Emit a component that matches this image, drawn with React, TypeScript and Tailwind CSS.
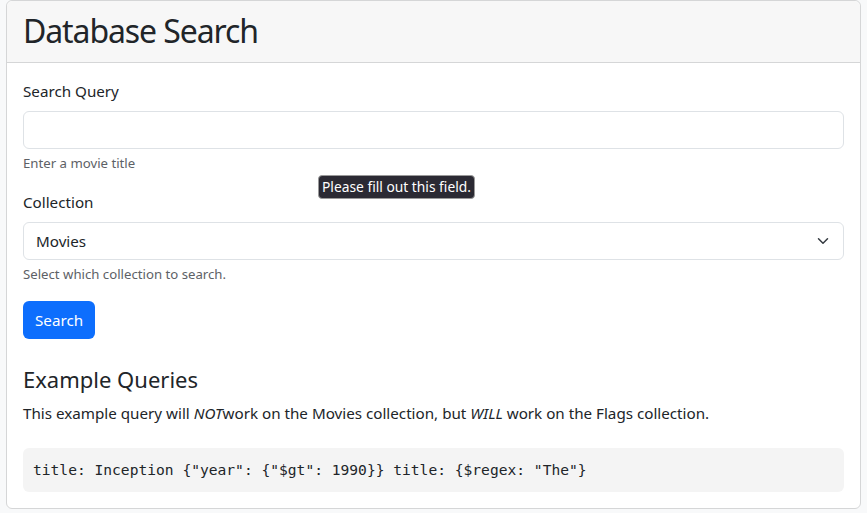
import React, { useState } from 'react';

const COLLECTIONS = ['Movies', 'Flags'];

const App: React.FC = () => {
  const [query, setQuery] = useState('');
  const [collection, setCollection] = useState('Movies');

  return (
    <div className="min-h-[513px] bg-[#f8f9fa] font-['Segoe_UI','Noto_Sans',sans-serif] text-[#212529]">
      <div className="mx-[6px] rounded-md border border-[#d5d6d7] bg-white">
        {/* Header */}
        <div className="h-[62px] rounded-t-md border-b border-[#d5d6d7] bg-[#f7f7f7] px-4 pt-[9px]">
          <h1 className="text-[32px] leading-[42px] font-normal tracking-[-1.1px]">Database Search</h1>
        </div>

        {/* Body */}
        <form className="relative p-4" onSubmit={(e) => e.preventDefault()}>
          <div className="mb-4">
            <label className="block text-[15.2px] leading-6">Search Query</label>
            <input
              type="text"
              value={query}
              onChange={(e) => setQuery(e.target.value)}
              className="mt-2 block h-[38px] w-full rounded-md border border-[#dee2e6] bg-white px-3 outline-none"
            />
            <div className="mt-1 text-[13.2px] leading-[21px] text-[#5d6166]">Enter a movie title</div>
          </div>

          {/* validation bubble */}
          <div className="absolute left-[311px] top-[112px] rounded-[4px] border border-[#9a9a9a] bg-[#2b2a33] px-[3px] py-[1px] text-[13.8px] leading-[20px] text-white">
            Please fill out this field.
          </div>

          <div className="mb-4">
            <label className="block text-[15.2px] leading-6">Collection</label>
            <div className="relative mt-2">
              <select
                value={collection}
                onChange={(e) => setCollection(e.target.value)}
                className="block h-[38px] w-full appearance-none rounded-md border border-[#dee2e6] bg-white pl-3 pr-9 text-[15.2px] outline-none"
              >
                {COLLECTIONS.map((c) => (
                  <option key={c}>{c}</option>
                ))}
              </select>
              <svg
                className="pointer-events-none absolute right-[15px] top-1/2 h-[12px] w-[12px] -translate-y-1/2"
                viewBox="0 0 16 16"
                fill="none"
                stroke="#343a40"
                strokeWidth="2"
                strokeLinecap="round"
                strokeLinejoin="round"
              >
                <path d="m2 5 6 6 6-6" />
              </svg>
            </div>
            <div className="mt-1 text-[13.2px] leading-[21px] text-[#5d6166]">Select which collection to search.</div>
          </div>

          <button
            type="submit"
            className="h-[38px] rounded-md bg-[#0d6efd] px-3 text-[15.2px] text-white hover:bg-[#0b5ed7]"
          >
            Search
          </button>

          <h4 className="mt-[26px] mb-2 text-[22px] leading-[28px] font-normal">Example Queries</h4>
          <p className="text-[15.2px] leading-6">
            This example query will <em>NOT</em>work on the Movies collection, but <em>WILL</em> work on the Flags
            collection.
          </p>

          <pre className="mt-[23px] rounded-md bg-[#f4f4f4] px-[10px] py-[10px] font-['DejaVu_Sans_Mono',monospace] text-[14.6px] leading-6">
            title: Inception {'{"year": {"$gt": 1990}}'} title: {'{$regex: "The"}'}
          </pre>
        </form>
      </div>
    </div>
  );
};

export default App;
